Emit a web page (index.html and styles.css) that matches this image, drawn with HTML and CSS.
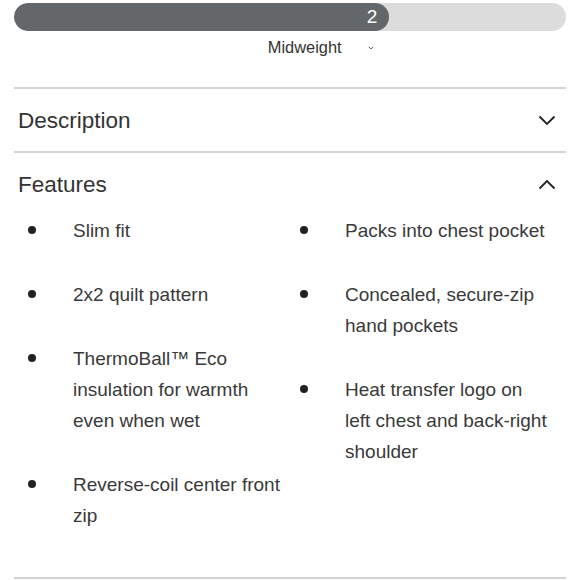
FILE: index.html
```html
<!DOCTYPE html>
<html>
<head>
<meta charset="utf-8">
<link rel="stylesheet" href="styles.css">
</head>
<body>
<div class="page">
  <div class="scale">
    <div class="track"><div class="fill" style="width:68%"><span class="value">2</span></div></div>
    <div class="scale-label">Midweight <svg class="mini-chev" width="6" height="4" viewBox="0 0 6 4"><path d="M0.8 0.8 L3 3 L5.2 0.8" fill="none" stroke="#666" stroke-width="1"/></svg></div>
  </div>
  <section class="acc">
    <div class="acc-head"><span class="acc-title">Description</span>
      <svg class="chev" width="18" height="11" viewBox="0 0 18 11"><path d="M1.5 1.5 L9 9 L16.5 1.5" fill="none" stroke="#222" stroke-width="1.8"/></svg></div>
  </section>
  <section class="acc">
    <div class="acc-head"><span class="acc-title">Features</span>
      <svg class="chev" width="18" height="11" viewBox="0 0 18 11"><path d="M1.5 9.5 L9 2 L16.5 9.5" fill="none" stroke="#222" stroke-width="1.8"/></svg></div>
    <div class="features">
      <ul class="col">
        <li>Slim fit</li>
        <li>2x2 quilt pattern</li>
        <li>ThermoBall™ Eco insulation for warmth even when wet</li>
        <li>Reverse-coil center front zip</li>
      </ul>
      <ul class="col">
        <li>Packs into chest pocket</li>
        <li>Concealed, secure-zip hand pockets</li>
        <li>Heat transfer logo on left chest and back-right shoulder</li>
      </ul>
    </div>
  </section>
</div>
</body>
</html>
```
FILE: styles.css
```css
html, body { margin: 0; padding: 0; background: #fff; }
body { font-family: "Liberation Sans", Arial, sans-serif; color: #333; }
.page { padding: 3px 14px 0; }
.track { height: 28px; background: #dcdcdc; border-radius: 14px; overflow: hidden; }
.fill { height: 28px; background: #63676a; border-radius: 14px; display: flex; align-items: center; justify-content: flex-end; box-sizing: border-box; padding-right: 12px; }
.value { color: #fff; font-size: 19px; line-height: 28px; }
.scale-label { text-align: center; font-size: 16.4px; line-height: 20px; margin-top: 6px; padding-left: 62px; color: #333; height: 20px; margin-bottom: 30px; }
.mini-chev { margin-left: 22px; vertical-align: 3px; }
.acc { border-top: 2px solid #d4d4d4; }
.acc-head { height: 62px; display: flex; align-items: center; justify-content: space-between; padding: 0 10px 0 4px; }
.acc-title { font-size: 22.5px; color: #333; position: relative; top: 1px; }
.chev { display: block; }
.features { display: grid; grid-template-columns: 272px 272px; padding-bottom: 13px; border-bottom: 2px solid #d4d4d4; }
.col { list-style: none; margin: 0; padding: 0; }
.col li { position: relative; font-size: 19px; line-height: 31px; color: #3a3a3a; padding-left: 59px; padding-right: 6px; margin-bottom: 33px; }
.col li::before { content: ""; position: absolute; left: 14px; top: 11px; width: 8px; height: 8px; border-radius: 50%; background: #222; }
```
